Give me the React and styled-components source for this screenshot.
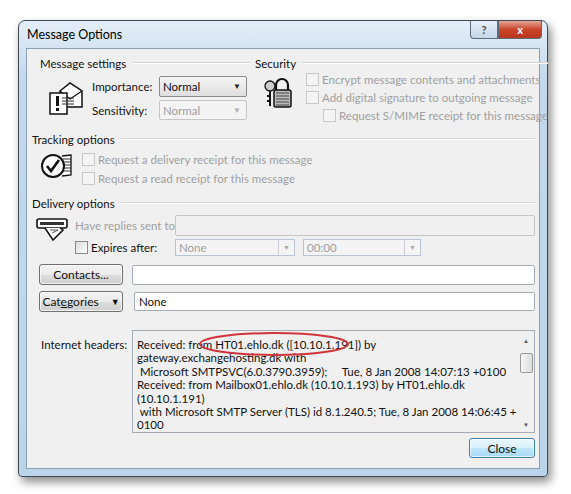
import React from 'react'
import styled, { createGlobalStyle } from 'styled-components'

const Global = createGlobalStyle`
  html, body { margin: 0; background: #fff; }
  body { font-family: Lato, "Open Sans", sans-serif; font-size: 11.5px; color: #111; }
`

const Page = styled.div`
  width: 571px;
  height: 494px;
  padding: 20px 0 0 18px;
  box-sizing: border-box;
`

const Window = styled.div`
  width: 530px;
  height: 457px;
  box-sizing: border-box;
  border: 1px solid #3f4a55;
  border-radius: 7px 7px 4px 4px;
  background: linear-gradient(#e4eef8, #c3d8ec 60px, #bcd4ea);
  box-shadow: 3px 5px 10px rgba(0,0,0,0.45);
  padding: 0 7px 7px 7px;
  display: flex;
  flex-direction: column;
`

const TitleBar = styled.div`
  height: 27px;
  display: flex;
  align-items: center;
  justify-content: space-between;
  padding-left: 1px;
  font-size: 12.5px;
  color: #000;
`

const Caps = styled.div`
  display: flex;
  align-self: flex-start;
  margin-right: -2px;
`

const CapBtn = styled.div`
  width: ${p => p.$w}px;
  height: 17px;
  border: 1px solid #5c6b7a;
  border-top: none;
  display: flex;
  align-items: center;
  justify-content: center;
  font-weight: bold;
  font-size: 11px;
  color: ${p => p.$red ? '#fff' : '#445'};
  background: ${p => p.$red ? 'linear-gradient(#e7a593, #c9452b 50%, #b8361d)' : 'linear-gradient(#e8f0f8, #c6d6e6)'};
  border-radius: ${p => p.$red ? '0 0 4px 0' : '0 0 0 4px'};
`

const Client = styled.div`
  flex: 1;
  background: #f0f0f0;
  border: 1px solid #8aa0b6;
  padding: 7px 4px 0 5px;
  position: relative;
  display: flex;
  flex-direction: column;
`

const Row = styled.div`
  display: flex;
  align-items: ${p => p.$align || 'center'};
  gap: ${p => p.$gap || 0}px;
`

const Group = styled.div`
  display: flex;
  flex-direction: column;
  flex: ${p => p.$flex || 'none'};
  width: ${p => p.$w ? p.$w + 'px' : 'auto'};
`

const Legend = styled.div`
  display: flex;
  align-items: center;
  gap: 6px;
  height: 14px;
  padding-left: ${p => p.$indent || 0}px;
  margin-right: ${p => p.$mr || 0}px;
  &::after { content: ''; flex: 1; height: 1px; background: #d5d5d5; border-bottom: 1px solid #fff; }
`

const Label = styled.span`
  color: ${p => p.$dis ? '#a0a0a0' : '#111'};
  width: ${p => p.$w ? p.$w + 'px' : 'auto'};
  white-space: nowrap;
`

const Select = styled.div`
  width: ${p => p.$w}px;
  height: ${p => p.$h || 20}px;
  box-sizing: border-box;
  border: 1px solid ${p => p.$dis ? '#c6c6c6' : '#8a8a8a'};
  border-radius: 2px;
  background: ${p => p.$dis ? '#f4f4f4' : 'linear-gradient(#f6f6f6, #dedede)'};
  display: flex;
  align-items: center;
  padding-left: 3px;
  color: ${p => p.$dis ? '#a0a0a0' : '#111'};
`

const Arrow = styled.span`
  margin-left: auto;
  margin-right: 5px;
  font-size: 8px;
  color: ${p => p.$dis ? '#b0b0b0' : '#222'};
`

const DisCombo = styled.div`
  width: ${p => p.$w}px;
  height: 17px;
  box-sizing: border-box;
  border: 1px solid #b9c5d6;
  background: #f4f4f4;
  display: flex;
  align-items: stretch;
  color: #a0a0a0;
  span:first-child { flex: 1; padding-left: 3px; line-height: 15px; }
  span:last-child { width: 15px; border-left: 1px solid #ccd; display: flex; align-items: center; justify-content: center; font-size: 7px; color: #aaa; }
`

const Check = styled.label`
  display: flex;
  align-items: center;
  gap: 3px;
  height: ${p => p.$h || 18}px;
  padding-left: ${p => p.$indent || 0}px;
  color: ${p => p.$dis ? '#a0a0a0' : '#111'};
  white-space: nowrap;
  &::before {
    content: '';
    width: 11px;
    height: 11px;
    border: 1px solid ${p => p.$dis ? '#c8c8c8' : '#8a8a8a'};
    background: ${p => p.$dis ? '#f4f4f4' : 'linear-gradient(135deg, #ddd, #fff)'};
  }
`

const Field = styled.div`
  flex: 1;
  height: ${p => p.$h || 20}px;
  box-sizing: border-box;
  border: 1px solid ${p => p.$dis ? '#c6c6c6' : '#a5acb5'};
  background: ${p => p.$dis ? '#f0f0f0' : '#fff'};
  border-radius: 2px;
  display: flex;
  align-items: center;
  padding-left: 4px;
`

const Button = styled.div`
  width: ${p => p.$w || 84}px;
  height: ${p => p.$h || 21}px;
  box-sizing: border-box;
  border: 1px solid ${p => p.$def ? '#3c7fb1' : '#707070'};
  border-radius: 3px;
  background: ${p => p.$def ? 'linear-gradient(#eaf6fd, #d9f0fc 50%, #bee6fd 51%, #a7d9f5)' : 'linear-gradient(#f2f2f2, #ebebeb 50%, #dddddd 51%, #cfcfcf)'};
  box-shadow: inset 0 0 0 1px rgba(255,255,255,0.7);
  display: flex;
  align-items: center;
  justify-content: center;
  gap: 12px;
  font-size: 12px;
`

const Headers = styled.div`
  flex: 1;
  height: 103px;
  box-sizing: border-box;
  border: 1px solid #a5acb5;
  background: #f0f0f0;
  display: flex;
  position: relative;
`

const HeaderText = styled.div`
  flex: 1;
  padding: 7px 0 0 4px;
  line-height: 13.4px;
  white-space: pre;
  overflow: hidden;
`

const Scroll = styled.div`
  width: 16px;
  display: flex;
  flex-direction: column;
  align-items: center;
  font-size: 6px;
  color: #555;
  padding: 6px 0 4px;
  box-sizing: border-box;
  span:nth-child(2) {
    width: 11px; height: 18px; margin-top: 9px; border: 1px solid #999;
    background: linear-gradient(90deg, #f6f6f6, #dcdcdc); border-radius: 2px;
  }
  span:last-child { margin-top: auto; }
`

const Ring = styled.svg`
  position: absolute;
  left: 64px;
  top: -1px;
`

const Icon = styled.svg`
  flex: none;
`

const EnvelopeIcon = () => (
  <Icon width="36" height="34" viewBox="0 0 36 34">
    <path d="M12 10 L22 2 L34 10 L34 26 L12 26 Z" fill="#fff" stroke="#111" strokeWidth="1.5" />
    <path d="M12 10 L22 18 L34 10" fill="none" stroke="#111" strokeWidth="1.2" />
    <rect x="2" y="12" width="17" height="21" fill="#fff" stroke="#111" strokeWidth="1.5" />
    <rect x="8" y="15" width="3" height="10" fill="#111" />
    <rect x="8" y="27" width="3" height="3" fill="#111" />
    <path d="M14 17h12M14 20h12M14 23h12" stroke="#333" strokeWidth="1" />
  </Icon>
)

const LockIcon = () => (
  <Icon width="30" height="32" viewBox="0 0 30 32">
    <circle cx="6" cy="10" r="5" fill="#ccc" stroke="#111" strokeWidth="1.3" />
    <path d="M6 15 V30 M6 20h-3 M6 25h-3" stroke="#111" strokeWidth="2" />
    <path d="M12 14 V9 a6 6 0 0 1 12 0 V14" fill="none" stroke="#111" strokeWidth="2.2" />
    <rect x="10" y="14" width="17" height="17" rx="2" fill="#bbb" stroke="#111" strokeWidth="1.5" />
    <path d="M12 17h13M12 20h13M12 23h13M12 26h13M12 29h13" stroke="#444" strokeWidth="1" />
  </Icon>
)

const TrackIcon = () => (
  <Icon width="34" height="26" viewBox="0 0 34 26">
    <path d="M22 3 l9 -1 v20 l-9 1" fill="#fff" stroke="#111" strokeWidth="1.3" />
    <path d="M23 6h8M23 9h8M23 12h8M23 15h8M23 18h8" stroke="#333" strokeWidth="1" />
    <circle cx="13" cy="13" r="11" fill="#fff" stroke="#111" strokeWidth="2" />
    <path d="M7 13 l4 5 l8 -11" fill="none" stroke="#111" strokeWidth="2.6" />
  </Icon>
)

const DeliveryIcon = () => (
  <Icon width="32" height="26" viewBox="0 0 32 26">
    <rect x="1" y="3" width="30" height="9" rx="2" fill="#fff" stroke="#111" strokeWidth="1.6" />
    <rect x="4" y="6" width="24" height="3" fill="#333" />
    <path d="M9 12 L17 24 L27 14 L24 12" fill="#fff" stroke="#111" strokeWidth="1.5" />
    <path d="M14 14l8 0M16 17l6 -3" stroke="#555" strokeWidth="1" />
  </Icon>
)

const headerText = `Received: from HT01.ehlo.dk ([10.10.1.191]) by
gateway.exchangehosting.dk with
 Microsoft SMTPSVC(6.0.3790.3959);     Tue, 8 Jan 2008 14:07:13 +0100
Received: from Mailbox01.ehlo.dk (10.10.1.193) by HT01.ehlo.dk
(10.10.1.191)
 with Microsoft SMTP Server (TLS) id 8.1.240.5; Tue, 8 Jan 2008 14:06:45 +
0100`

export default function App() {
  return (
    <Page>
      <Global />
      <Window>
        <TitleBar>
          <span>Message Options</span>
          <Caps>
            <CapBtn $w={26}>?</CapBtn>
            <CapBtn $w={42} $red>x</CapBtn>
          </Caps>
        </TitleBar>
        <Client>
          <Row $align="flex-start">
            <Group $w={223}>
              <Legend $indent={8} $mr={4}>Message settings</Legend>
              <Row $gap={8} style={{ paddingLeft: 16, marginTop: 4 }}>
                <EnvelopeIcon />
                <Group>
                  <Row $gap={8} style={{ height: 24 }}>
                    <Label $w={59}>Importance:</Label>
                    <Select $w={88} $h={21}>Normal<Arrow>▼</Arrow></Select>
                  </Row>
                  <Row $gap={8} style={{ height: 24 }}>
                    <Label $w={59}>Sensitivity:</Label>
                    <Select $w={88} $dis>Normal<Arrow $dis>▼</Arrow></Select>
                  </Row>
                </Group>
              </Row>
            </Group>
            <Group $flex={1}>
              <Legend>Security</Legend>
              <Row $align="flex-start" $gap={12} style={{ paddingLeft: 9, marginTop: 0 }}>
                <div style={{ marginTop: 6 }}><LockIcon /></div>
                <Group>
                  <Check $dis>Encrypt message contents and attachments</Check>
                  <Check $dis>Add digital signature to outgoing message</Check>
                  <Check $dis $indent={17}>Request S/MIME receipt for this message</Check>
                </Group>
              </Row>
            </Group>
          </Row>

          <Group style={{ marginTop: 8 }}>
            <Legend>Tracking options</Legend>
            <Row $align="flex-start" $gap={8} style={{ paddingLeft: 8, marginTop: 4 }}>
              <div style={{ marginTop: 3 }}><TrackIcon /></div>
              <Group>
                <Check $dis $h={19}>Request a delivery receipt for this message</Check>
                <Check $dis $h={19}>Request a read receipt for this message</Check>
              </Group>
            </Row>
          </Group>

          <Group style={{ marginTop: 8 }}>
            <Legend>Delivery options</Legend>
            <Row $align="flex-start" $gap={7} style={{ paddingLeft: 4, marginTop: 4 }}>
              <div style={{ marginTop: 2 }}><DeliveryIcon /></div>
              <Group $flex={1}>
                <Row style={{ height: 22 }}>
                  <Label $w={100} $dis>Have replies sent to:</Label>
                  <Field $dis $h={21} />
                </Row>
                <Row style={{ height: 22 }}>
                  <Check $h={22} style={{ width: 100 }}>Expires after:</Check>
                  <DisCombo $w={120}><span>None</span><span>▼</span></DisCombo>
                  <div style={{ width: 8 }} />
                  <DisCombo $w={118}><span>00:00</span><span>▼</span></DisCombo>
                </Row>
              </Group>
            </Row>
            <Row $gap={9} style={{ paddingLeft: 7, marginTop: 6 }}>
              <Button>Contacts...</Button>
              <Field $h={20} />
            </Row>
            <Row $gap={11} style={{ paddingLeft: 7, marginTop: 6 }}>
              <Button><span>Cat<u>e</u>gories</span><span style={{ fontSize: 9 }}>▼</span></Button>
              <Field $h={19}>None</Field>
            </Row>
          </Group>

          <Row $align="flex-start" style={{ paddingLeft: 9, marginTop: 18 }}>
            <Label $w={91} style={{ marginTop: 8 }}>Internet headers:</Label>
            <Headers>
              <HeaderText>{headerText}</HeaderText>
              <Scroll><span>▲</span><span /><span>▼</span></Scroll>
              <Ring width="154" height="28" viewBox="0 0 154 28">
                <ellipse cx="77" cy="14" rx="74" ry="11" fill="none" stroke="#d0343a" strokeWidth="2" />
              </Ring>
            </Headers>
          </Row>
          <Row style={{ justifyContent: 'flex-end', marginTop: 5 }}>
            <Button $def $w={66} $h={20}>Close</Button>
          </Row>
        </Client>
      </Window>
    </Page>
  )
}
